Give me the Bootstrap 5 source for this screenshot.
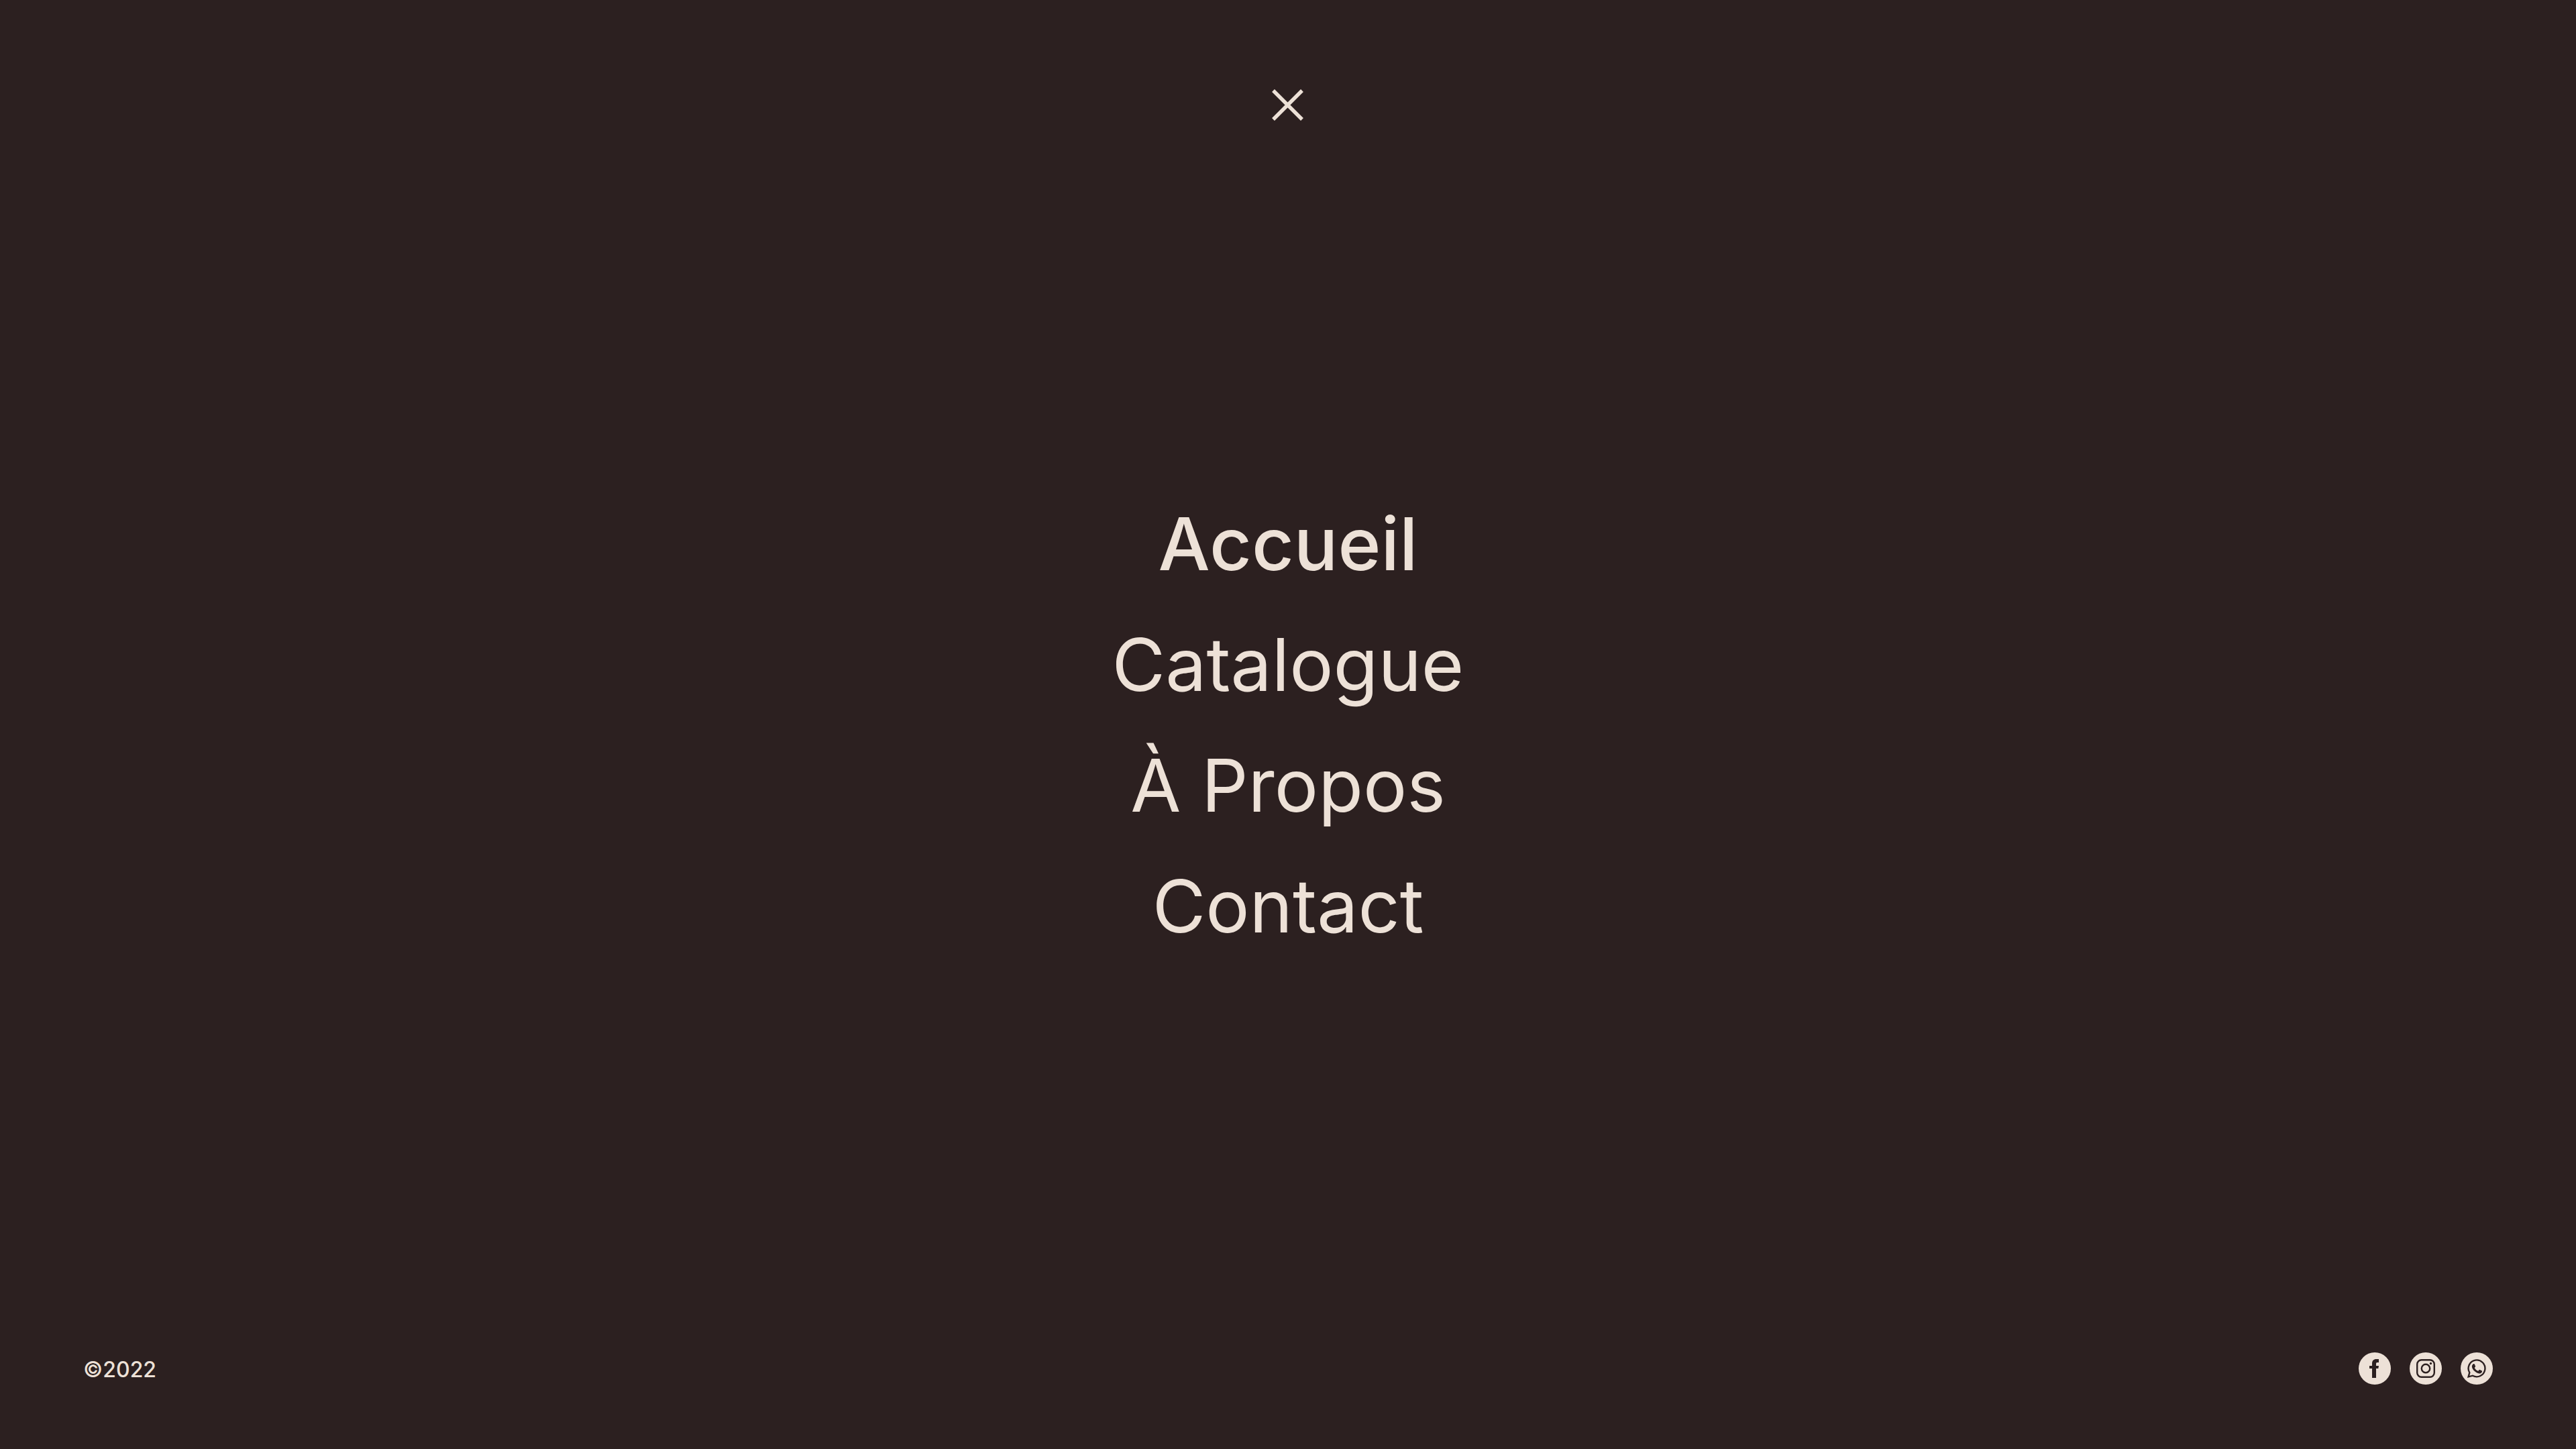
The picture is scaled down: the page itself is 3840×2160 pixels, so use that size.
<!DOCTYPE html>
<html lang="fr">
<head>
<meta charset="utf-8">
<meta name="viewport" content="width=device-width, initial-scale=1">
<title>Menu</title>
<link rel="stylesheet" href="https://cdn.jsdelivr.net/npm/bootstrap@5.3.0/dist/css/bootstrap.min.css">
<style>
  :root { --ink: #2c2020; --cream: #ede1d7; }
  body { background: var(--ink); color: var(--cream); font-family: Inter, "Liberation Sans", sans-serif; }
  .menu-edge { flex: 1 0 240px; }
  .menu-top { padding-top: 125px; }
  .menu-bottom { padding: 0 124px 96px; }
  .menu-close svg { width: 64px; height: 64px; }
  .menu-link { color: var(--cream); font-size: 109px; line-height: 180px; }
  .menu-link.active { font-weight: 500; }
  .menu-year { font-size: 32px; line-height: 44px; font-weight: 500; }
  .social-list { gap: 28px; }
  .social-list svg { width: 48px; height: 48px; }
</style>
</head>
<body>
<div class="d-flex flex-column min-vh-100">
  <header class="menu-edge menu-top d-flex justify-content-center align-items-start">
    <button type="button" class="menu-close btn p-0 border-0 lh-1" aria-label="Fermer">
      <svg class="d-block" viewBox="0 0 64 64" fill="none" stroke="#ede1d7" stroke-width="5.500" aria-hidden="true"><path d="M10 10 53 53M53 10 10 53"/></svg>
    </button>
  </header>
  <nav aria-label="Menu principal">
    <ul class="list-unstyled text-center mb-0">
      <li><a class="menu-link active d-block text-decoration-none" aria-current="page" href="#">Accueil</a></li>
      <li><a class="menu-link d-block text-decoration-none" href="#">Catalogue</a></li>
      <li><a class="menu-link d-block text-decoration-none" href="#">À Propos</a></li>
      <li><a class="menu-link d-block text-decoration-none" href="#">Contact</a></li>
    </ul>
  </nav>
  <footer class="menu-edge menu-bottom d-flex justify-content-between align-items-end">
    <p class="menu-year mb-0">©2022</p>
    <ul class="social-list list-unstyled d-flex mb-0">
      <li><a class="d-block" href="#" aria-label="Facebook">
        <svg class="d-block" viewBox="0 0 48 48" aria-hidden="true"><circle cx="24" cy="24" r="24" fill="#ede1d7"/><path fill="#2c2020" d="M20 38V24h-4v-4h4v-3.500c0-4.300 2.500-6.500 6.200-6.500H30v5h-2.200c-1.400 0-1.800.8-1.800 1.900V20h4l-.7 4H26v14z"/></svg>
      </a></li>
      <li><a class="d-block" href="#" aria-label="Instagram">
        <svg class="d-block" viewBox="0 0 48 48" fill="none" stroke="#2c2020" stroke-width="2.400" aria-hidden="true"><circle cx="24" cy="24" r="24" fill="#ede1d7" stroke="none"/><rect x="11.200" y="11.200" width="25.600" height="25.600" rx="6.500"/><circle cx="24" cy="24" r="6.200"/><circle cx="31.500" cy="16.500" r="1.700" fill="#2c2020" stroke="none"/></svg>
      </a></li>
      <li><a class="d-block" href="#" aria-label="WhatsApp">
        <svg class="d-block" viewBox="0 0 48 48" aria-hidden="true"><circle cx="24" cy="24" r="24" fill="#ede1d7"/><path fill="none" stroke="#2c2020" stroke-width="2.400" d="M11.600 36.400l1.700-6.300a12.400 12.400 0 1 1 4.700 4.600z"/><path fill="#2c2020" d="M18.900 17.200c.7-.5 1.600-.4 1.900.3l1.200 2.900c.2.500 0 .9-.3 1.300l-1 1.200c1.300 2.300 3 3.900 5.500 4.900l1.300-1.600c.3-.4.700-.5 1.200-.3l2.800 1.300c.6.300.6.700.5 1.300-.4 2-2.200 3.100-4.200 2.900-5.300-.7-10.200-5.500-10.900-9.900-.2-1.900.7-3.400 2-4.300z"/></svg>
      </a></li>
    </ul>
  </footer>
</div>
<script src="https://cdn.jsdelivr.net/npm/bootstrap@5.3.0/dist/js/bootstrap.bundle.min.js"></script>
</body>
</html>
